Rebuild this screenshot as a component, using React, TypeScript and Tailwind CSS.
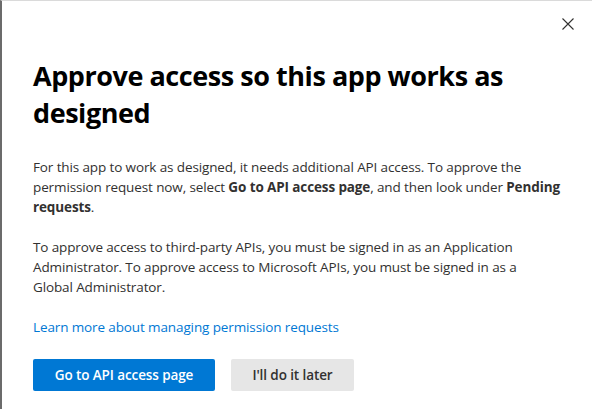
const font = { fontFamily: '"Open Sans", Arial, sans-serif' };

function CloseIcon() {
  return (
    <svg width="12" height="12" viewBox="0 0 12 12" fill="none" stroke="#323130" strokeWidth="1.1">
      <path d="M0.5 0.5 11.5 11.5M11.5 0.5 0.5 11.5" />
    </svg>
  );
}

export default function App() {
  return (
    <div
      className="flex h-[409px] w-[592px] flex-col overflow-hidden border-t border-l-2 border-t-[#dadada] border-l-[#6b6b6b] bg-white text-[#323130]"
      style={font}
    >
      <div className="flex justify-end pt-[17px] pr-[18px]">
        <button className="flex h-3 w-3 items-center justify-center" aria-label="Close">
          <CloseIcon />
        </button>
      </div>

      <div className="px-[31px] pt-[27px]">
        <h1 className="text-[27px] leading-[37px] font-bold tracking-[-0.45px] text-black">
          Approve access so this app works as designed
        </h1>

        <div className="mt-[26px] w-[540px] text-[13.5px] leading-[20px] tracking-[-0.12px]">
          <p>
            For this app to work as designed, it needs additional API access. To approve the
            <br />
            permission request now, select <b className="font-bold">Go to API access page</b>, and then
            look under <b className="font-bold">Pending</b>
            <br />
            <b className="font-bold">requests</b>.
          </p>
          <p className="mt-[20px]">
            To approve access to third-party APIs, you must be signed in as an Application
            <br />
            Administrator. To approve access to Microsoft APIs, you must be signed in as a
            <br />
            Global Administrator.
          </p>
          <a href="#" className="mt-[20px] block text-[#0078d4]">
            Learn more about managing permission requests
          </a>
        </div>

        <div className="mt-[22px] flex gap-4">
          <button className="h-8 w-[182px] rounded-[2px] bg-[#0078d4] text-[13.5px] font-semibold tracking-[-0.1px] text-white">
            Go to API access page
          </button>
          <button className="h-8 w-[123px] rounded-[2px] bg-[#e6e6e6] text-[13.5px] font-semibold tracking-[-0.1px] text-[#323130]">
            I&apos;ll do it later
          </button>
        </div>
      </div>
    </div>
  );
}
